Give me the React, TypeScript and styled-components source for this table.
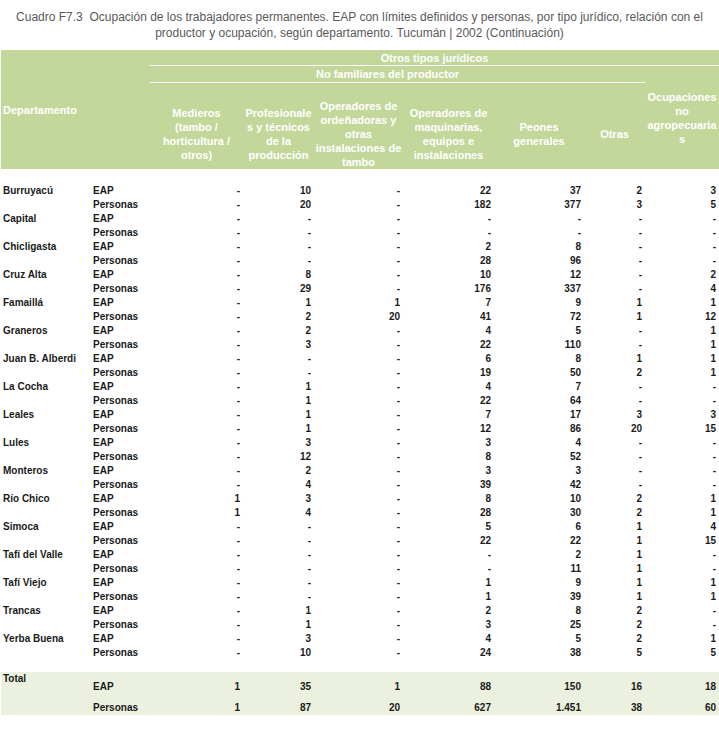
import React from "react";
import styled, { createGlobalStyle } from "styled-components";

const GlobalStyle = createGlobalStyle`
  * { box-sizing: border-box; }
  body {
    margin: 0;
    background: #ffffff;
    font-family: "Liberation Sans", Arial, sans-serif;
  }
`;

const COLS = "87px 62px 93px 71px 89px 91px 90px 61px 74px";

const Page = styled.div`
  width: 719px;
  padding-top: 9px;
`;

const Title = styled.h1`
  margin: 0 0 9px 0;
  font-size: 12px;
  font-weight: normal;
  line-height: 16px;
  color: #595959;
  text-align: center;
  white-space: pre;
`;

const Header = styled.div`
  margin-left: 1px;
  display: grid;
  grid-template-columns: ${COLS};
  grid-template-rows: 16px 17px 86px;
  background: #c4d79b;
  color: #ffffff;
  font-size: 11px;
  font-weight: bold;
  line-height: 14px;
`;

const DeptHead = styled.div`
  grid-column: 1 / 3;
  grid-row: 1 / 4;
  align-self: center;
  padding-left: 2px;
  padding-top: 1px;
`;

const GroupHead = styled.div<{ $from: number; $to: number; $shift?: number }>`
  grid-column: ${(p) => p.$from} / ${(p) => p.$to};
  grid-row: auto;
  border-bottom: 1px solid #ffffff;
  display: flex;
  align-items: center;
  justify-content: center;
  padding-right: ${(p) => p.$shift ?? 0}px;
`;

const SideHead = styled.div`
  grid-column: 9;
  grid-row: 2 / 4;
  display: flex;
  align-items: center;
  justify-content: center;
  text-align: center;
  white-space: nowrap;
`;

const ColHead = styled.div<{ $col: number }>`
  grid-column: ${(p) => p.$col};
  grid-row: 3;
  display: flex;
  align-items: center;
  justify-content: center;
  text-align: center;
  white-space: nowrap;
  padding-top: 16px;
`;

const Body = styled.div`
  margin-left: 1px;
  padding-top: 15px;
  display: grid;
  grid-template-columns: ${COLS};
  grid-auto-rows: 14px;
  font-size: 10px;
  font-weight: bold;
  line-height: 14px;
  color: #1a1a1a;
`;

const DeptCell = styled.div`
  grid-column: 1;
  grid-row: span 2;
  padding-left: 2px;
  white-space: nowrap;
`;

const KindCell = styled.div`
  grid-column: 2;
  padding-left: 5px;
`;

const Num = styled.div`
  text-align: right;
  padding-right: 3px;
`;

const Totals = styled.div`
  margin-left: 1px;
  margin-top: 12px;
  display: grid;
  grid-template-columns: ${COLS};
  grid-template-rows: 22px 21px;
  background: #ebf1de;
  font-size: 10px;
  font-weight: bold;
  line-height: 14px;
  color: #1a1a1a;
`;

const TotalLabel = styled.div`
  grid-column: 1;
  grid-row: 1 / 3;
  padding-left: 2px;
`;

const TotalKind = styled.div`
  grid-column: 2;
  align-self: end;
  padding-left: 5px;
`;

const TotalNum = styled.div`
  align-self: end;
  text-align: right;
  padding-right: 3px;
`;

type Row = [string, string[], string[]];

const D = "-";
const rows: Row[] = [
  ["Burruyacú", [D, "10", D, "22", "37", "2", "3"], [D, "20", D, "182", "377", "3", "5"]],
  ["Capital", [D, D, D, D, D, D, D], [D, D, D, D, D, D, D]],
  ["Chicligasta", [D, D, D, "2", "8", D, D], [D, D, D, "28", "96", D, D]],
  ["Cruz Alta", [D, "8", D, "10", "12", D, "2"], [D, "29", D, "176", "337", D, "4"]],
  ["Famaillá", [D, "1", "1", "7", "9", "1", "1"], [D, "2", "20", "41", "72", "1", "12"]],
  ["Graneros", [D, "2", D, "4", "5", D, "1"], [D, "3", D, "22", "110", D, "1"]],
  ["Juan B. Alberdi", [D, D, D, "6", "8", "1", "1"], [D, D, D, "19", "50", "2", "1"]],
  ["La Cocha", [D, "1", D, "4", "7", D, D], [D, "1", D, "22", "64", D, D]],
  ["Leales", [D, "1", D, "7", "17", "3", "3"], [D, "1", D, "12", "86", "20", "15"]],
  ["Lules", [D, "3", D, "3", "4", D, D], [D, "12", D, "8", "52", D, D]],
  ["Monteros", [D, "2", D, "3", "3", D, D], [D, "4", D, "39", "42", D, D]],
  ["Río Chico", ["1", "3", D, "8", "10", "2", "1"], ["1", "4", D, "28", "30", "2", "1"]],
  ["Simoca", [D, D, D, "5", "6", "1", "4"], [D, D, D, "22", "22", "1", "15"]],
  ["Tafí del Valle", [D, D, D, D, "2", "1", D], [D, D, D, D, "11", "1", D]],
  ["Tafí Viejo", [D, D, D, "1", "9", "1", "1"], [D, D, D, "1", "39", "1", "1"]],
  ["Trancas", [D, "1", D, "2", "8", "2", D], [D, "1", D, "3", "25", "2", D]],
  ["Yerba Buena", [D, "3", D, "4", "5", "2", "1"], [D, "10", D, "24", "38", "5", "5"]],
];

const totalEap = ["1", "35", "1", "88", "150", "16", "18"];
const totalPer = ["1", "87", "20", "627", "1.451", "38", "60"];

const colHeads: string[][] = [
  ["Medieros", "(tambo /", "horticultura /", "otros)"],
  ["Profesionale", "s y técnicos", "de la", "producción"],
  ["Operadores de", "ordeñadoras y", "otras", "instalaciones de", "tambo"],
  ["Operadores de", "maquinarias,", "equipos e", "instalaciones"],
  ["Peones", "generales"],
  ["Otras"],
];

const lines = (ls: string[]) =>
  ls.map((l, i) => (
    <React.Fragment key={i}>
      {i > 0 && <br />}
      {l}
    </React.Fragment>
  ));

export default function App() {
  return (
    <Page>
      <GlobalStyle />
      <Title>
        {"Cuadro F7.3  Ocupación de los trabajadores permanentes. EAP con límites definidos y personas, por tipo jurídico, relación con el\nproductor y ocupación, según departamento. Tucumán | 2002 (Continuación)"}
      </Title>
      <Header>
        <DeptHead>Departamento</DeptHead>
        <GroupHead $from={3} $to={10}>Otros tipos jurídicos</GroupHead>
        <GroupHead $from={3} $to={9} $shift={20}>No familiares del productor</GroupHead>
        <SideHead>{lines(["Ocupaciones", "no", "agropecuaria", "s"])}</SideHead>
        {colHeads.map((h, i) => (
          <ColHead key={i} $col={i + 3}>
            <div>{lines(h)}</div>
          </ColHead>
        ))}
      </Header>
      <Body>
        {rows.map(([name, eap, per]) => (
          <React.Fragment key={name}>
            <DeptCell>{name}</DeptCell>
            <KindCell>EAP</KindCell>
            {eap.map((v, i) => (
              <Num key={"e" + i}>{v}</Num>
            ))}
            <KindCell>Personas</KindCell>
            {per.map((v, i) => (
              <Num key={"p" + i}>{v}</Num>
            ))}
          </React.Fragment>
        ))}
      </Body>
      <Totals>
        <TotalLabel>Total</TotalLabel>
        <TotalKind>EAP</TotalKind>
        {totalEap.map((v, i) => (
          <TotalNum key={"te" + i}>{v}</TotalNum>
        ))}
        <TotalKind>Personas</TotalKind>
        {totalPer.map((v, i) => (
          <TotalNum key={"tp" + i}>{v}</TotalNum>
        ))}
      </Totals>
    </Page>
  );
}
